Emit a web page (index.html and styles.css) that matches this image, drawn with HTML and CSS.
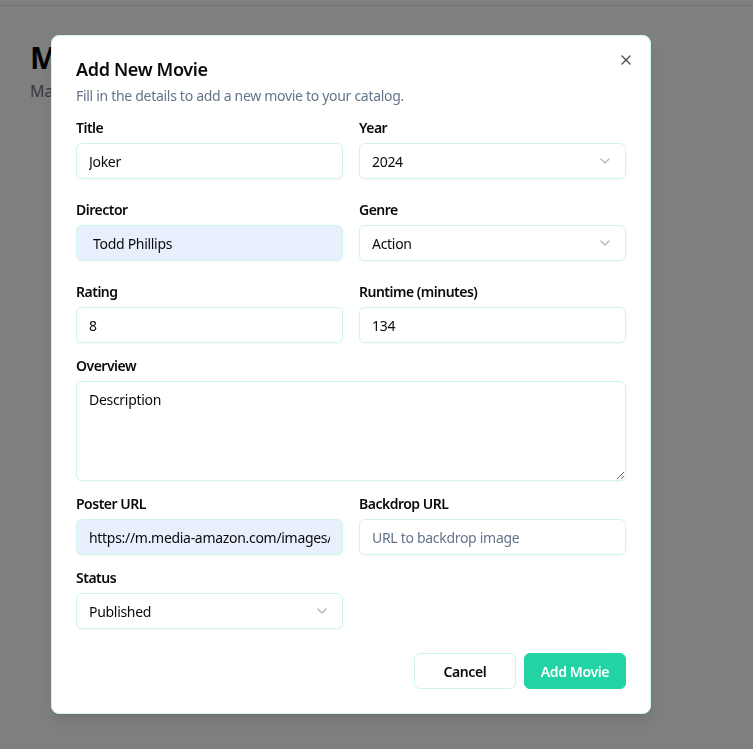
FILE: index.html
```html
<!DOCTYPE html>
<html lang="en">
<head>
<meta charset="utf-8">
<title>Add New Movie</title>
<link rel="stylesheet" href="styles.css">
</head>
<body>
<div class="topbar"></div>
<main class="page">
  <h1 class="page-title">Movies</h1>
  <p class="page-sub">Manage your movie catalog</p>
</main>
<div class="overlay"></div>
<div class="dialog" role="dialog">
  <button class="close" aria-label="Close">
    <svg width="16" height="16" viewBox="0 0 24 24" fill="none" stroke="currentColor" stroke-width="2" stroke-linecap="round" stroke-linejoin="round"><path d="M18 6 6 18"/><path d="m6 6 12 12"/></svg>
  </button>
  <div class="head">
    <h2 class="title">Add New Movie</h2>
    <p class="desc">Fill in the details to add a new movie to your catalog.</p>
  </div>
  <form class="form">
    <div class="row row-wide">
      <div class="field">
        <label class="label">Title</label>
        <input class="input" value="Joker">
      </div>
      <div class="field">
        <label class="label">Year</label>
        <div class="input select"><span>2024</span>
          <svg class="chev" width="16" height="16" viewBox="0 0 24 24" fill="none" stroke="currentColor" stroke-width="2" stroke-linecap="round" stroke-linejoin="round"><path d="m6 9 6 6 6-6"/></svg>
        </div>
      </div>
    </div>
    <div class="row row-wide">
      <div class="field">
        <label class="label">Director</label>
        <input class="input autofill indent" value="Todd Phillips">
      </div>
      <div class="field">
        <label class="label">Genre</label>
        <div class="input select"><span>Action</span>
          <svg class="chev" width="16" height="16" viewBox="0 0 24 24" fill="none" stroke="currentColor" stroke-width="2" stroke-linecap="round" stroke-linejoin="round"><path d="m6 9 6 6 6-6"/></svg>
        </div>
      </div>
    </div>
    <div class="row">
      <div class="field">
        <label class="label">Rating</label>
        <input class="input" value="8">
      </div>
      <div class="field">
        <label class="label">Runtime (minutes)</label>
        <input class="input" value="134">
      </div>
    </div>
    <div class="field">
      <label class="label">Overview</label>
      <textarea class="input textarea">Description</textarea>
    </div>
    <div class="row">
      <div class="field">
        <label class="label">Poster URL</label>
        <input class="input autofill" value="https://m.media-amazon.com/images/M/MV5BNGVjNWI4ZGUtNzE0MS00YTJmLWE0ZDctN2ZiYTk2YmI3NTYyXkEyXkFqcGdeQXVyMTkxNjUyNQ@@._V1_.jpg">
      </div>
      <div class="field">
        <label class="label">Backdrop URL</label>
        <input class="input" placeholder="URL to backdrop image">
      </div>
    </div>
    <div class="row">
      <div class="field">
        <label class="label">Status</label>
        <div class="input select"><span>Published</span>
          <svg class="chev" width="16" height="16" viewBox="0 0 24 24" fill="none" stroke="currentColor" stroke-width="2" stroke-linecap="round" stroke-linejoin="round"><path d="m6 9 6 6 6-6"/></svg>
        </div>
      </div>
      <div></div>
    </div>
    <div class="footer">
      <button type="button" class="btn btn-outline">Cancel</button>
      <button type="button" class="btn btn-primary">Add Movie</button>
    </div>
  </form>
</div>
</body>
</html>
```

FILE: styles.css
```css
* { box-sizing: border-box; }
html, body { margin: 0; padding: 0; }
body {
  background: #ffffff;
  font-family: "Noto Sans", "Open Sans", sans-serif;
  color: #0a0a0a;
  height: 749px;
  overflow: hidden;
}
.topbar {
  height: 6px;
  border-bottom: 1px solid #d6e4e0;
}
.page {
  padding: 34px 30px;
}
.page-title {
  margin: 0;
  font-size: 30px;
  line-height: 36px;
  font-weight: 700;
}
.page-sub {
  margin: 4px 0 0;
  font-size: 16px;
  color: #737373;
}
.overlay {
  position: fixed;
  inset: 0;
  background: rgba(0, 0, 0, 0.5);
}
.dialog {
  position: fixed;
  left: 51px;
  top: 35px;
  width: 600px;
  height: 679px;
  background: #ffffff;
  border: 1px solid #cdf7ea;
  border-radius: 8px;
  padding: 24px;
  box-shadow: 0 10px 15px -3px rgba(0,0,0,0.1), 0 4px 6px -4px rgba(0,0,0,0.1);
}
.close {
  position: absolute;
  top: 16px;
  right: 16px;
  width: 16px;
  height: 16px;
  padding: 0;
  border: 0;
  background: none;
  color: #0a0a0a;
  opacity: 0.7;
  display: flex;
}
.head {
  display: flex;
  flex-direction: column;
  gap: 8px;
}
.title {
  margin: 0;
  font-size: 18px;
  line-height: 18px;
  font-weight: 600;
  letter-spacing: -0.35px;
}
.desc {
  margin: 0;
  font-size: 14px;
  line-height: 20px;
  color: #64748b;
  letter-spacing: -0.3px;
}
.form {
  margin-top: 15px;
  display: flex;
  flex-direction: column;
  gap: 16px;
}
.row {
  display: grid;
  grid-template-columns: 1fr 1fr;
  column-gap: 16px;
}
.row-wide { margin-bottom: 8px; }
.field {
  display: flex;
  flex-direction: column;
  gap: 8px;
  min-width: 0;
}
.label {
  font-size: 14px;
  line-height: 14px;
  font-weight: 600;
  color: #0a0a0a;
  letter-spacing: -0.5px;
}
.input {
  height: 36px;
  width: 100%;
  border: 1px solid #cdf7ea;
  border-radius: 6px;
  background: #ffffff;
  padding: 0 12px;
  font-family: inherit;
  font-size: 14px;
  letter-spacing: -0.3px;
  color: #0a0a0a;
  box-shadow: 0 1px 2px rgba(0,0,0,0.04);
  outline: none;
}
.input::placeholder { color: #64748b; }
.autofill { background: #e8f0fe; }
.indent { padding-left: 16px; }
.select {
  display: flex;
  align-items: center;
  justify-content: space-between;
}
.chev {
  color: #0a0a0a;
  opacity: 0.3;
}
.textarea {
  height: 100px;
  padding: 8px 12px;
  line-height: 20px;
  resize: vertical;
  display: block;
}
.footer {
  margin-top: 8px;
  display: flex;
  justify-content: flex-end;
  gap: 8px;
}
.btn {
  height: 36px;
  min-width: 102px;
  padding: 0 16px;
  border-radius: 6px;
  font-family: inherit;
  font-size: 14px;
  font-weight: 600;
  letter-spacing: -0.4px;
  cursor: pointer;
}
.btn-outline {
  background: #ffffff;
  border: 1px solid #cdf7ea;
  color: #0a0a0a;
}
.btn-primary {
  background: #22d3a3;
  border: 1px solid #22d3a3;
  color: #ffffff;
}
```
